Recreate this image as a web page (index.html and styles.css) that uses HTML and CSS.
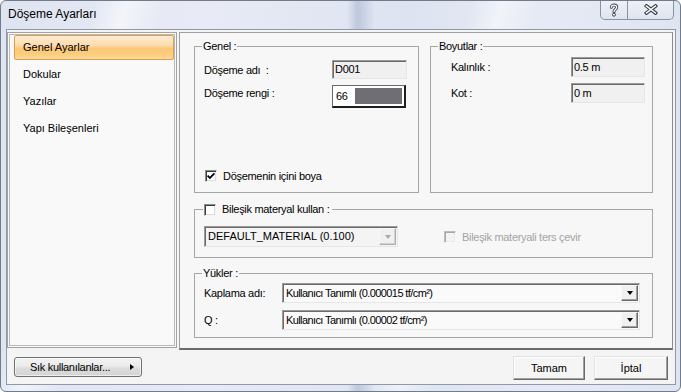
FILE: index.html
```html
<!DOCTYPE html>
<html lang="tr">
<head>
<meta charset="utf-8">
<title>Döşeme Ayarları</title>
<link rel="stylesheet" href="styles.css">
</head>
<body>
<div class="window">
  <div class="titlebar">
    <span class="title">Döşeme Ayarları</span>
    <div class="caption">
      <span class="cbtn help">
        <svg width="10" height="14" viewBox="0 0 10 14">
          <path d="M2.3 4.3 C2.3 1.3 7.7 1.3 7.7 4.3 C7.7 6.5 5 6.4 5 8.8" fill="none" stroke="#3a3f47" stroke-width="3" stroke-linecap="round"/>
          <path d="M2.3 4.3 C2.3 1.3 7.7 1.3 7.7 4.3 C7.7 6.5 5 6.4 5 8.8" fill="none" stroke="#fff" stroke-width="1.3" stroke-linecap="round"/>
          <circle cx="5" cy="11.7" r="1.5" fill="#fff" stroke="#3a3f47" stroke-width="1"/>
        </svg>
      </span>
      <span class="cbtn close">
        <svg width="14" height="11" viewBox="0 0 14 11">
          <path d="M2.5 2 L11.5 9 M11.5 2 L2.5 9" stroke="#3a3f47" stroke-width="3.6" stroke-linecap="square"/>
          <path d="M2.5 2 L11.5 9 M11.5 2 L2.5 9" stroke="#fff" stroke-width="1.5" stroke-linecap="square"/>
        </svg>
      </span>
    </div>
  </div>
  <div class="client">
    <div class="main">
      <ul class="nav">
        <li class="nav-item selected">Genel Ayarlar</li>
        <li class="nav-item">Dokular</li>
        <li class="nav-item">Yazılar</li>
        <li class="nav-item">Yapı Bileşenleri</li>
      </ul>
      <div class="content">
        <div class="top-row">
          <div class="group genel">
            <span class="legend">Genel :</span>
            <div class="row">
              <span class="lbl lbl-genel">Döşeme adı &nbsp;:</span>
              <span class="field field-genel">D001</span>
            </div>
            <div class="row row-color">
              <span class="lbl lbl-genel lbl-top">Döşeme rengi :</span>
              <span class="colorbox"><span class="color-num">66</span><span class="swatch"></span></span>
            </div>
            <div class="check-row">
              <span class="check checked"><svg width="10" height="10" viewBox="0 0 10 10"><path d="M1.6 4.6 L3.9 7 L8.4 2.4" fill="none" stroke="#000" stroke-width="1.8"/></svg></span>
              <span>Döşemenin içini boya</span>
            </div>
          </div>
          <div class="group boyut">
            <span class="legend">Boyutlar :</span>
            <div class="row">
              <span class="lbl lbl-boyut">Kalınlık :</span>
              <span class="field field-boyut">0.5 m</span>
            </div>
            <div class="row row-kot">
              <span class="lbl lbl-boyut">Kot :</span>
              <span class="field field-boyut">0 m</span>
            </div>
          </div>
        </div>
        <div class="group bilesik">
          <span class="legend legend-check"><span class="check"></span><span>Bileşik materyal kullan :</span></span>
          <div class="row">
            <span class="combo combo-mat">
              <span class="combo-text">DEFAULT_MATERIAL (0.100)</span>
              <span class="combo-btn disabled"><span class="tri"></span></span>
            </span>
            <span class="check-row disabled-row">
              <span class="check disabled"></span>
              <span>Bileşik materyali ters çevir</span>
            </span>
          </div>
        </div>
        <div class="group yukler">
          <span class="legend">Yükler :</span>
          <div class="row">
            <span class="lbl lbl-yuk">Kaplama adı:</span>
            <span class="combo combo-yuk">
              <span class="combo-text">Kullanıcı Tanımlı (0.000015 tf/cm²)</span>
              <span class="combo-btn"><span class="tri"></span></span>
            </span>
          </div>
          <div class="row row-q">
            <span class="lbl lbl-yuk">Q :</span>
            <span class="combo combo-yuk">
              <span class="combo-text">Kullanıcı Tanımlı (0.00002 tf/cm²)</span>
              <span class="combo-btn"><span class="tri"></span></span>
            </span>
          </div>
        </div>
      </div>
    </div>
    <div class="footer">
      <span class="btn-fav">Sık kullanılanlar...<span class="rtri"></span></span>
      <span class="btn btn-ok">Tamam</span>
      <span class="btn btn-cancel">İptal</span>
    </div>
  </div>
</div>
</body>
</html>
```
FILE: styles.css
```css
* { box-sizing: border-box; }
html, body { margin: 0; padding: 0; }
body {
  width: 681px;
  height: 392px;
  overflow: hidden;
  background: #ffffff;
  font-family: "Liberation Sans", Arial, sans-serif;
  font-size: 11px;
  color: #000;
}

.window {
  width: 681px;
  height: 392px;
  border: 1px solid #707b8c;
  border-radius: 6px;
  overflow: hidden;
  display: flex;
  flex-direction: column;
  background:
    linear-gradient(90deg, transparent 51%, rgba(150,165,195,0.45) 52.5%, rgba(150,165,195,0.2) 54%, transparent 55%),
    linear-gradient(105deg, transparent 12%, rgba(255,255,255,0.55) 16%, transparent 21%, transparent 60%, rgba(255,255,255,0.5) 64%, transparent 69%),
    linear-gradient(90deg, #dfe4f1 0%, #e8ebf5 30%, #dde3f0 60%, #e6eaf4 80%, #dfe5f0 100%);
}

.titlebar {
  height: 28px;
  flex-shrink: 0;
  display: flex;
  align-items: flex-start;
  justify-content: space-between;
}
.title {
  font-size: 12px;
  line-height: 14px;
  padding: 6px 0 0 7px;
  color: #000;
}
.caption {
  display: flex;
  height: 20px;
  margin: -1px 6px 0 0;
  border: 1px solid #8a93a2;
  border-top: none;
  border-radius: 0 0 5px 5px;
  overflow: hidden;
  background: linear-gradient(#eef1f8, #dfe5ef);
}
.cbtn {
  display: flex;
  align-items: center;
  justify-content: center;
  height: 100%;
}
.help { width: 27px; border-right: 1px solid #8a93a2; }
.close { width: 45px; }

.client {
  height: 356px;
  flex-shrink: 0;
  margin: 0 4px 0 5px;
  border: 1px solid #8e98a8;
  background: #f4f4f4;
  display: flex;
  flex-direction: column;
}

.main {
  height: 320px;
  padding-top: 2px;
  display: flex;
  gap: 2px;
}

.nav {
  list-style: none;
  margin: 0;
  width: 170px;
  height: 316px;
  padding: 2px 2px 0 6px;
  border: 1px solid #a3a3a3;
  background: #f9f9f9;
  box-shadow: inset 0 0 0 1px #f9f9f9, inset 0 0 0 2px #b9b9b9;
}
.nav-item {
  height: 25px;
  line-height: 25px;
  padding-left: 9px;
  margin-bottom: 2px;
  font-size: 11px;
  white-space: nowrap;
}
.nav-item.selected {
  padding-left: 8px;
  border: 1px solid #dc9f4d;
  border-radius: 2px;
  line-height: 23px;
  background: linear-gradient(#fdecd2 0%, #fddcae 40%, #fbc777 55%, #fbcd80 80%, #fcd896 100%);
}

.content {
  width: 494px;
  height: 318px;
  border: 1px solid #a0a0a0;
  border-right-color: #8c8c8c;
  border-bottom: 2px solid #6c6c6c;
  background: #f7f7f7;
  padding: 13px 19px 0 14px;
  letter-spacing: -0.3px;
}

.top-row {
  display: flex;
  gap: 11px;
}

.group {
  position: relative;
  border: 1px solid #a6a6a6;
}
.legend {
  position: absolute;
  top: -7px;
  left: 7px;
  line-height: 13px;
  padding: 0 1px;
  background: #f7f7f7;
  white-space: nowrap;
}
.legend-check {
  display: flex;
  align-items: center;
  gap: 6px;
  left: 8px;
  padding: 0 3px 0 1px;
}

.genel {
  width: 225px;
  height: 147px;
  display: flex;
  flex-direction: column;
  padding: 13px 0 0 9px;
}
.boyut {
  flex: 1;
  height: 147px;
  padding: 10px 0 0 20px;
}

.row {
  display: flex;
  align-items: center;
}
.row-color { margin-top: 6px; align-items: flex-start; }
.row-kot { margin-top: 6px; }
.row-q { margin-top: 7px; }

.lbl { white-space: nowrap; }
.lbl-genel { width: 128px; }
.lbl-top { padding-top: 2px; }
.lbl-boyut { width: 120px; }
.lbl-yuk { width: 78px; }

.field {
  height: 19px;
  line-height: 17px;
  padding-left: 2px;
  background: #f0f0f0;
  border: 1px solid;
  border-color: #9a9a9a #e6e6e6 #e6e6e6 #9a9a9a;
  box-shadow: inset 1px 1px 0 #6a6a6a;
}
.field-genel { width: 75px; }
.field-boyut { width: 74px; height: 20px; line-height: 18px; }

.colorbox {
  width: 74px;
  height: 23px;
  display: flex;
  border: 1px solid #6a6a6a;
  border-right: 2px solid #1e1e1e;
  border-bottom: 2px solid #1e1e1e;
  background: #ffffff;
  padding: 2px 2px 2px 1px;
}
.color-num {
  width: 21px;
  line-height: 16px;
  padding-left: 2px;
  background: #ffffff;
}
.swatch {
  flex: 1;
  background: #6f6e75;
}

.check-row {
  display: flex;
  align-items: center;
  gap: 6px;
  white-space: nowrap;
}
.genel .check-row {
  margin-top: auto;
  margin-bottom: 10px;
  margin-left: 1px;
}
.check {
  width: 12px;
  height: 12px;
  flex-shrink: 0;
  display: flex;
  align-items: center;
  justify-content: center;
  background: #ffffff;
  border: 1px solid;
  border-color: #8a8a8a #f4f4f4 #f4f4f4 #8a8a8a;
  box-shadow: inset 1px 1px 0 #3c3c3c, inset -1px -1px 0 #dcdcdc;
}
.check.disabled {
  background: #f4f4f4;
  border-color: #bdbdbd #fafafa #fafafa #bdbdbd;
  box-shadow: inset 1px 1px 0 #a8a8a8, inset -1px -1px 0 #e8e8e8;
}

.bilesik {
  margin-top: 16px;
  height: 49px;
  padding: 16px 0 0 9px;
}
.disabled-row {
  margin-left: 46px;
  color: #a3a3a3;
}

.yukler {
  margin-top: 15px;
  height: 65px;
  padding: 9px 0 0 9px;
}

.combo {
  display: flex;
  align-items: stretch;
  height: 20px;
  background: #fafafa;
  border: 1px solid;
  border-color: #9a9a9a #e6e6e6 #e6e6e6 #9a9a9a;
  box-shadow: inset 1px 1px 0 #6a6a6a;
  padding: 1px;
}
.combo-mat { width: 194px; height: 21px; background: #f4f4f4; letter-spacing: 0; }
.combo-yuk { width: 358px; letter-spacing: -0.6px; }
.combo-text {
  flex: 1;
  padding-left: 2px;
  line-height: 16px;
  white-space: nowrap;
  overflow: hidden;
}
.combo-mat .combo-text { line-height: 17px; }
.combo-btn {
  width: 17px;
  display: flex;
  align-items: center;
  justify-content: center;
  background: #f0f0f0;
  border: 1px solid;
  border-color: #f8f8f8 #6a6a6a #6a6a6a #f8f8f8;
  box-shadow: inset -1px -1px 0 #a0a0a0;
}
.tri {
  width: 0;
  height: 0;
  border-left: 3.5px solid transparent;
  border-right: 3.5px solid transparent;
  border-top: 4px solid #000;
}
.combo-btn.disabled {
  border-color: #f8f8f8 #b0b0b0 #b0b0b0 #f8f8f8;
  box-shadow: inset -1px -1px 0 #d0d0d0;
}
.combo-btn.disabled .tri { border-top-color: #a8a8a8; }

.footer {
  height: 34px;
  display: flex;
  align-items: flex-start;
  padding: 6px 7px 0 7px;
  gap: 9px;
}
.btn-fav {
  margin-top: 1px;
  width: 128px;
  height: 20px;
  display: flex;
  align-items: center;
  padding-left: 15px;
  border: 1px solid #707070;
  border-radius: 3px;
  background: linear-gradient(#f3f3f3 0%, #ebebeb 45%, #dddddd 55%, #d3d3d3 100%);
  box-shadow: inset 0 0 0 1px rgba(255,255,255,0.6);
  white-space: nowrap;
  letter-spacing: -0.3px;
}
.rtri {
  width: 0;
  height: 0;
  margin-left: 20px;
  border-top: 3.5px solid transparent;
  border-bottom: 3.5px solid transparent;
  border-left: 4px solid #000;
}
.btn {
  height: 24px;
  display: flex;
  align-items: center;
  justify-content: center;
  background: #f5f5f5;
  border: 1px solid;
  border-color: #e2e2e2 #6a6a6a #6a6a6a #e2e2e2;
  box-shadow: inset -1px -1px 0 #a0a0a0, inset 1px 1px 0 #ffffff;
}
.btn-ok { width: 72px; margin-left: auto; }
.btn-cancel { width: 74px; }
```
